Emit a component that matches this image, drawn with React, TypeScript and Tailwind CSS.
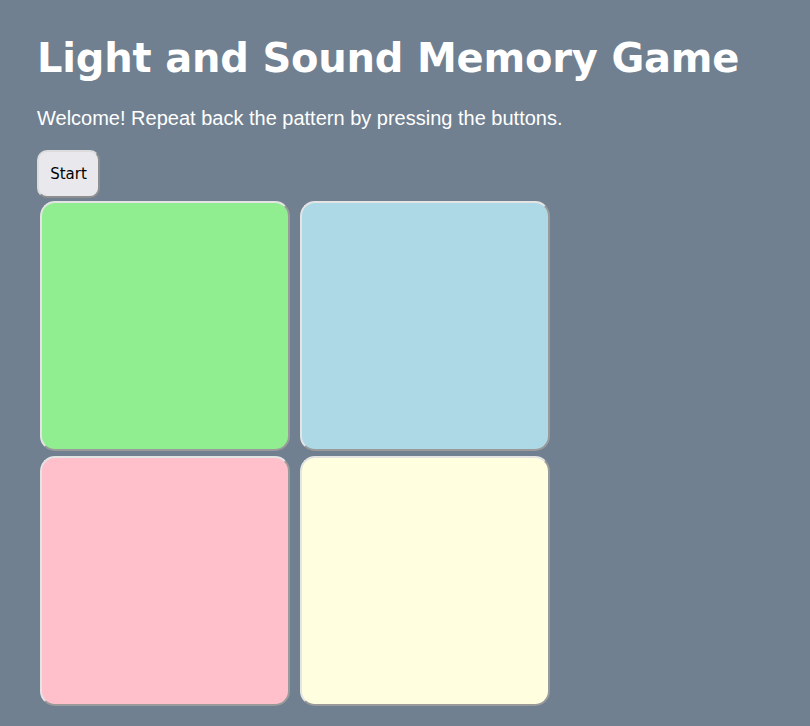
const pads = [
  "bg-[#90ee90]",
  "bg-[#add8e6]",
  "bg-[#ffc0cb]",
  "bg-[#ffffe0]",
];

const App = (): JSX.Element => {
  return (
    <div className="min-h-[726px] w-full bg-[#708090] px-[37px] pt-[34px] text-white">
      <h1 className="whitespace-nowrap font-['DejaVu_Sans',Verdana,sans-serif] text-[40px] font-bold leading-[48px] tracking-[-0.2px]">
        Light and Sound Memory Game
      </h1>
      <p className="mt-[25px] font-['Liberation_Sans',Arial,sans-serif] text-[20px] leading-[23px]">
        Welcome! Repeat back the pattern by pressing the buttons.
      </p>
      <button className="mt-[20px] h-[48px] w-[63px] rounded-[10px] border-2 border-[#8f8f8f] border-t-[#dcdcdc] border-l-[#dcdcdc] bg-[#e9e9ed] font-['DejaVu_Sans',Tahoma,sans-serif] text-[15px] text-black">
        Start
      </button>
      <div className="mt-[3px] grid w-fit grid-cols-[250px_250px] gap-x-[10px] gap-y-[5px] pl-[3px]">
        {pads.map((bg) => (
          <button
            key={bg}
            className={`h-[250px] w-[250px] rounded-[15px] border-2 border-[#9a9a9a] border-t-[#e4e4e4] border-l-[#e4e4e4] ${bg}`}
          />
        ))}
      </div>
    </div>
  );
};

export default App;
